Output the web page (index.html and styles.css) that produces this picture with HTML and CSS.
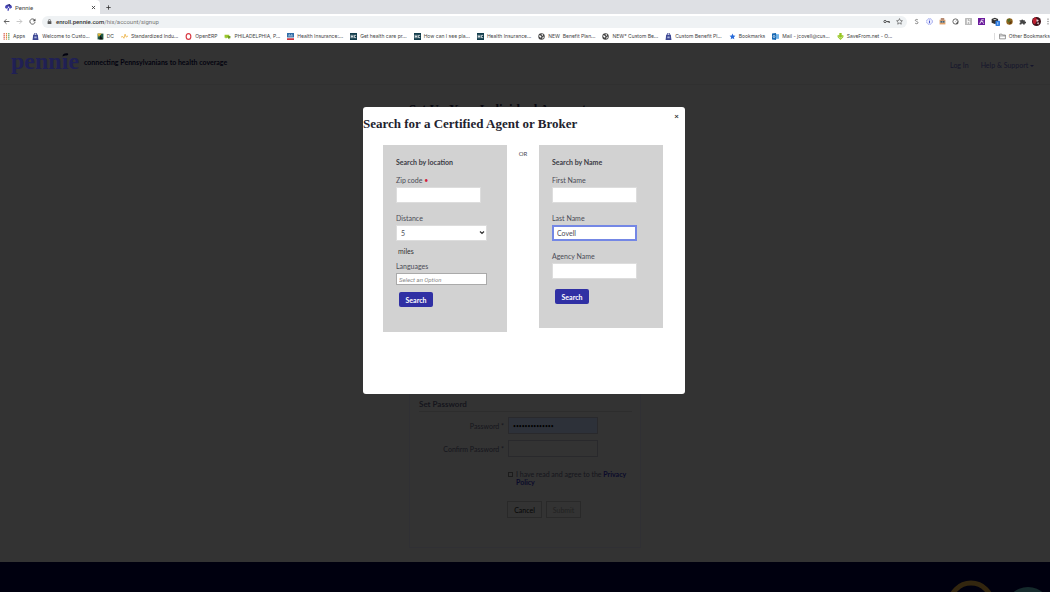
FILE: index.html
```
<!DOCTYPE html>
<html lang="en">
<head>
<meta charset="utf-8">
<title>Pennie</title>
<link rel="stylesheet" href="styles.css">
</head>
<body>
<svg class="defs" aria-hidden="true">
  <symbol id="bag" viewBox="0 0 12 12"><path d="M2 3h8l1 9H1z"/><path d="M4 4V2a2 2 0 0 1 4 0v2" fill="none" stroke="currentColor" stroke-width="1.500"/><path d="M4 6h4v3H4z" fill="#a9b3d8"/></symbol>
  <symbol id="globe" viewBox="0 0 12 12"><circle cx="6" cy="6" r="5.500"/><path d="M2 4l3 .5L6 7 4.500 8 2 6zM6 1.500l3 1L8 5 6.500 4zM8 7l2-1-.5 3L7 10z" fill="#fff"/></symbol>
  <symbol id="hc" viewBox="0 0 12 12"><path d="M0 0h12v12H0z" fill="#123c4b"/><path d="M2 3v6M5 3v6M2 6h3M10.500 4h-3v4h3" fill="none" stroke="#fff" stroke-width="1.300"/></symbol>
</svg>

<div class="browser">
  <div class="tabs">
    <div class="tab">
      <svg class="ico" viewBox="0 0 12 12"><path d="M0 6a6 5 0 0 1 12 0L9 8 8 6 6 12 4 11l1-4-3 1z" fill="#4948b8"/><path d="M3 2l5-2 2 3z" fill="#25225f"/><circle cx="6" cy="5.500" r="1.200" fill="#fff"/></svg>
      <span class="tab-title">Pennie</span>
      <button class="plain" aria-label="Close tab"><svg class="tiny" viewBox="0 0 8 8"><path d="M1.500 1.500l5 5m0-5l-5 5" stroke="#333" stroke-width="1.300"/></svg></button>
    </div>
    <button class="plain newtab" aria-label="New tab"><svg class="tiny" viewBox="0 0 8 8"><path d="M4 .5v7M.5 4h7" stroke="#333" stroke-width="1.300"/></svg></button>
  </div>
  <div class="toolbar">
    <button class="plain" aria-label="Back"><svg class="ico" viewBox="0 0 12 12"><path d="M11 6H2m4-4L2 6l4 4" fill="none" stroke="#444" stroke-width="1.400"/></svg></button>
    <button class="plain" aria-label="Forward"><svg class="ico" viewBox="0 0 12 12"><path d="M1 6h9M6 2l4 4-4 4" fill="none" stroke="#bbb" stroke-width="1.400"/></svg></button>
    <button class="plain" aria-label="Reload"><svg class="ico" viewBox="0 0 12 12"><path d="M10 4a4.500 4.500 0 1 0 .4 3" fill="none" stroke="#444" stroke-width="1.400"/><path d="M11 1v4.500H6.500z" fill="#444"/></svg></button>
    <div class="address">
      <svg class="tiny" viewBox="0 0 8 8"><path d="M1 3.500h6V8H1z" fill="#555"/><path d="M2.500 4V2a1.500 1.500 0 0 1 3 0v2" fill="none" stroke="#555"/></svg>
      <span class="url"><b>enroll.pennie.com</b>/hix/account/signup</span>
      <svg class="ico" viewBox="0 0 12 12"><circle cx="3.500" cy="6" r="2" fill="none" stroke="#444" stroke-width="1.500"/><path d="M5.500 6H11v2.500M9 6v2" fill="none" stroke="#444" stroke-width="1.500"/></svg>
      <svg class="ico" viewBox="0 0 12 12"><path d="M6 1l1.500 3.300 3.500.4-2.600 2.400.7 3.500L6 8.900l-3.100 1.700.7-3.500L1 4.700l3.500-.4z" fill="none" stroke="#444"/></svg>
    </div>
    <div class="extensions">
      <svg class="ico" viewBox="0 0 12 12"><path d="M8.500 3.500C7.500 2 4 2 4 4s4.500 1.500 4.500 4S4.500 10 3.500 8.500" fill="none" stroke="#666" stroke-width="1.300"/></svg>
      <svg class="ico" viewBox="0 0 12 12"><circle cx="6" cy="6" r="5" fill="#eef" stroke="#6878e0" stroke-dasharray="3 1"/><path d="M6 3v1m0 1v4" stroke="#3848c8" stroke-width="1.500"/></svg>
      <svg class="ico" viewBox="0 0 12 12"><path d="M1 3h10v8H1z" fill="#e2a168"/><path d="M3 0h6v4H3z" fill="#b68b72"/><path d="M2 5h8v3H2z" fill="#7898ad"/><circle cx="4" cy="6.500" r="1" fill="#333"/><circle cx="8" cy="6.500" r="1" fill="#333"/></svg>
      <svg class="ico" viewBox="0 0 12 12"><circle cx="6" cy="6" r="4.500" fill="none" stroke="#555" stroke-width="1.500"/><path d="M6 6l2-2M7 10l3-4v4z" stroke="#555" fill="#555"/></svg>
      <svg class="ico" viewBox="0 0 12 12"><rect width="12" height="12" rx="1" fill="#bbb"/><path d="M4 2v8M4 6h4v4M8 2v2" fill="none" stroke="#fff" stroke-width="1.500"/></svg>
      <svg class="ico" viewBox="0 0 12 12"><path d="M0 0h12v12H0z" fill="#6b1b9c"/><path d="M2 9h2l2-6h4M5 6h4M8 7l2 3" fill="none" stroke="#fff" stroke-width="1.300"/></svg>
      <svg class="badge" viewBox="0 0 14 14"><path d="M1 3l5-2 5 2v6l-5 2-5-2z" fill="#333"/><path d="M3 4l3-1 3 1-3 1z" fill="#ddd"/><rect x="7" y="6" width="7" height="8" rx="1" fill="#2f7de1"/><path d="M10.500 8v4" stroke="#fff"/></svg>
      <svg class="ico" viewBox="0 0 12 12"><circle cx="6" cy="6" r="5.500" fill="#93641d"/><path d="M2 3l4-2 2 3-4 4z" fill="#4e6b2a"/><path d="M6 7l4-2-1 4-3 2z" fill="#59330f"/></svg>
      <svg class="ico" viewBox="0 0 12 12"><path d="M1 4h3a1.500 1.500 0 1 1 3 0h3v2.500a1.500 1.500 0 1 1 0 2.500v2H7a1.500 1.500 0 0 0-3 0H1V8.500a1.500 1.500 0 0 0 0-3z" fill="#444"/></svg>
      <svg class="avatar" viewBox="0 0 12 12"><circle cx="6" cy="6" r="6" fill="#3b1118"/><path d="M1 3l4-3 2 4-3 6-3-2z" fill="#bd1f2f"/><path d="M6 3l3 1-1 2H6zM6 8l3-1v3z" fill="#e8d9dc"/></svg>
      <svg class="dots" viewBox="0 0 2 12"><path d="M1 1v2m0 2v2m0 2v2" stroke="#555" stroke-width="1.500"/></svg>
    </div>
  </div>
  <nav class="bookmarks">
    <a href="#"><svg class="ico" viewBox="0 0 12 12"><path d="M2 0v12" stroke="#d85a50" stroke-width="2" stroke-dasharray="2.500 1"/><path d="M6 0v12" stroke="#e08a3c" stroke-width="2" stroke-dasharray="2.500 1"/><path d="M10 0v12" stroke="#5ba466" stroke-width="2" stroke-dasharray="2.500 1"/></svg>Apps</a>
    <a href="#"><svg class="ico indigo"><use href="#bag"/></svg>Welcome to Custo...</a>
    <a href="#"><svg class="ico" viewBox="0 0 12 12"><path d="M1 1h10v10H1z" fill="#1d5743"/><path d="M1 1h7L3 7z" fill="#e5b636"/><path d="M6 4l4 7H4z" fill="#111"/></svg>DC</a>
    <a href="#"><svg class="ico" viewBox="0 0 12 12"><path d="M0 7l3-1 2 3 2-7 2 5 3-2" fill="none" stroke="#eeb54a" stroke-width="1.500"/></svg>Standardized Indu...</a>
    <a href="#"><svg class="ico" viewBox="0 0 12 12"><ellipse cx="6" cy="6" rx="4" ry="5" fill="none" stroke="#d93b45" stroke-width="2"/></svg>OpenERP</a>
    <a href="#"><svg class="ico" viewBox="0 0 12 12"><path d="M1 3h8v5H5L3 10V8H1z" fill="#9bc72d"/><path d="M6 5h5v4H9v2L7 9z" fill="#6e9e22"/></svg>PHILADELPHIA, P...</a>
    <a href="#"><svg class="ico" viewBox="0 0 12 12"><path d="M0 0h12v8H0z" fill="#2f6da7"/><path d="M0 8h12v1H0z" fill="#fff"/><path d="M0 9h12v3H0z" fill="#ca3540"/><path d="M2 5h8M3 3h2m2 0h2" stroke="#fff"/></svg>Health Insurance:...</a>
    <a href="#"><svg class="ico"><use href="#hc"/></svg>Get health care pr...</a>
    <a href="#"><svg class="ico"><use href="#hc"/></svg>How can I see pla...</a>
    <a href="#"><svg class="ico"><use href="#hc"/></svg>Health Insurance...</a>
    <a href="#"><svg class="ico grey"><use href="#globe"/></svg>NEW&nbsp; Benefit Plan...</a>
    <a href="#"><svg class="ico grey"><use href="#globe"/></svg>NEW* Custom Be...</a>
    <a href="#"><svg class="ico indigo"><use href="#bag"/></svg>Custom Benefit Pl...</a>
    <a href="#"><svg class="ico" viewBox="0 0 12 12"><path d="M6 1l1.500 3.300 3.500.4-2.600 2.400.7 3.500L6 8.900l-3.100 1.700.7-3.500L1 4.700l3.500-.4z" fill="#276bdb"/></svg>Bookmarks</a>
    <a href="#"><svg class="ico" viewBox="0 0 12 12"><path d="M5 2h7v8H5z" fill="#72b4e8"/><path d="M0 1l7-1v12l-7-1z" fill="#1768b3"/><ellipse cx="3.500" cy="6" rx="1.500" ry="2" fill="none" stroke="#fff"/></svg>Mail - jcovell@cus...</a>
    <a href="#"><svg class="ico" viewBox="0 0 12 12"><path d="M4 0h4v4h3v3L6 12 1 7V4h3z" fill="#96c620"/><path d="M3 6l3 3 3-3" fill="none" stroke="#fff"/></svg>SaveFrom.net - O...</a>
    <a href="#" class="other"><svg class="ico" viewBox="0 0 12 12"><path d="M1 2h4l1 1.500h5V10H1zM1 5h10" fill="none" stroke="#555"/></svg>Other Bookmarks</a>
  </nav>
</div>

<div class="page">
  <header class="site-header">
    <a class="logo" href="#">penn<span class="hat">ı<svg viewBox="0 0 12 8"><path d="M0 7C0 1 6 0 11 1c1 2 0 4-3 4-3 0-5 0-8 2z" fill="#02020f"/></svg></span>e</a>
    <span class="tagline">connecting Pennsylvanians to health coverage</span>
    <nav class="site-nav"><a href="#">Log In</a><a href="#">Help &amp; Support <span class="caret"></span></a></nav>
  </header>
  <main class="signup">
    <h1>Set Up Your Individual Account</h1>
    <form class="card">
      <h2>Set Password</h2>
      <div class="row"><label for="pw">Password *</label><input id="pw" class="filled" type="password" value="abcdefghijklmn"></div>
      <div class="row"><label for="pw2">Confirm Password *</label><input id="pw2" type="password"></div>
      <div class="agree"><input id="agree" type="checkbox"><label for="agree">I have read and agree to the <a href="#">Privacy<br>Policy</a></label></div>
      <div class="actions"><button type="button">Cancel</button><button type="button" disabled>Submit</button></div>
    </form>
  </main>
  <footer class="site-footer"><svg viewBox="0 0 110 30"><circle cx="31" cy="42" r="21" fill="none" stroke="#33260f" stroke-width="5"/><circle cx="88" cy="48" r="23" fill="#152a2c"/></svg></footer>

  <div class="modal" role="dialog" aria-labelledby="dlg-title">
    <button class="plain close" aria-label="Close">×</button>
    <h2 id="dlg-title">Search for a Certified Agent or Broker</h2>
    <div class="panels">
      <form class="panel location">
        <h3>Search by location</h3>
        <label for="zip">Zip code <span class="req">•</span></label>
        <input id="zip" type="text">
        <label for="dist">Distance</label>
        <div class="picker">
          <select id="dist"><option>5</option></select>
          <svg viewBox="0 0 6 4"><path d="M1 .5l2 2 2-2" fill="none" stroke="#333" stroke-width="1.200"/></svg>
        </div>
        <span class="miles">miles</span>
        <label for="lang">Languages</label>
        <input id="lang" class="lang" type="text" placeholder="Select an Option">
        <button type="button" class="primary">Search</button>
      </form>
      <span class="or">OR</span>
      <form class="panel name">
        <h3>Search by Name</h3>
        <label for="first">First Name</label>
        <input id="first" type="text">
        <label for="last">Last Name</label>
        <input id="last" class="focused" type="text" value="Covell">
        <label for="agency">Agency Name</label>
        <input id="agency" type="text">
        <button type="button" class="primary">Search</button>
      </form>
    </div>
  </div>
</div>
</body>
</html>
```
FILE: styles.css
```
* { box-sizing: border-box; }
body {
  margin: 0;
  min-height: 100vh;
  display: flex;
  flex-direction: column;
  overflow: hidden;
  font-family: Lato, sans-serif;
  font-size: 7px;
}
h1, h2, h3 { margin: 0; }
a { color: inherit; text-decoration: none; }
button, input, select { font-family: inherit; font-size: 7px; margin: 0; }
.plain { display: flex; border: 0; padding: 0; background: none; }
.defs { display: none; }

/* Browser chrome */
.browser { font-family: Roboto, sans-serif; font-size: 6px; color: #444; background: #fff; }
.ico { width: 7px; height: 7px; flex: none; }
.tiny { width: 5px; height: 5px; flex: none; }
.indigo { color: #3d4794; fill: #3d4794; }
.grey { fill: #444; }
.tabs { display: flex; align-items: center; height: 14px; background: #dee0e4; }
.tab { display: flex; align-items: center; gap: 3px; width: 100px; height: 14px; padding: 0 4px 0 5px; background: #fff; border-radius: 0 4px 0 0; }
.tab-title { flex: 1; }
.newtab { margin-left: 6px; }
.toolbar { display: flex; align-items: center; gap: 6px; height: 15px; padding: 0 1px 0 3px; }
.address { flex: 1; display: flex; align-items: center; gap: 6px; height: 12px; padding: 0 4px 0 5px; border-radius: 6px; background: #eff2f4; }
.address .tiny { margin-right: -2px; }
.url { flex: 1; color: #777; font-size: 6px; }
.url b { color: #333; font-weight: 500; }
.extensions { display: flex; align-items: center; gap: 6px; }
.badge { width: 9px; height: 9px; }
.avatar { width: 9px; height: 9px; }
.dots { width: 2px; height: 7px; }
.bookmarks { display: flex; align-items: center; gap: 7px; height: 14px; padding: 0 0 0 3px; white-space: nowrap; font-family: Inter, sans-serif; font-size: 5px; }
.bookmarks a { display: flex; align-items: center; gap: 3px; }
.bookmarks .other { margin-left: auto; padding-left: 4px; border-left: 1px solid #ddd; }

/* Dimmed page */
.page { position: relative; flex: 1; display: flex; flex-direction: column; background: #333; color: #15151c; }
.site-header { display: flex; align-items: flex-start; height: 42px; padding: 0 16px 0 11px; border-bottom: 1px solid #303030; }
.logo { font-family: "Liberation Serif", serif; font-weight: bold; font-size: 24px; line-height: 36px; color: #202055; }
.hat { position: relative; }
.hat svg { position: absolute; left: 0; top: 5px; width: 7px; height: 4px; }
.tagline { margin: 14px 0 0 5px; font-weight: 700; line-height: 10px; color: #03030f; }
.site-nav { display: flex; gap: 12px; margin: 17px 0 0 auto; line-height: 10px; color: #15152c; }
.caret { display: inline-block; border: 2px solid transparent; border-top-color: currentColor; border-bottom: 0; vertical-align: middle; }
.signup { flex: 1; display: flex; flex-direction: column; width: 232px; margin: 0 auto 14px; }
.signup h1 { padding-top: 15px; font-family: "Liberation Serif", serif; font-size: 13px; line-height: 18px; white-space: nowrap; color: #08080f; }
.card { flex: 1; display: flex; flex-direction: column; justify-content: flex-end; padding: 0 8px 29px 9px; border: 1px solid #303034; }
.card h2 { margin-bottom: 5px; padding-bottom: 2px; border-bottom: 1px solid #2d2d2d; font-size: 8px; line-height: 10px; }
.row { display: flex; align-items: center; gap: 4px; margin-bottom: 6px; }
.row label { width: 85px; text-align: right; }
.row input { width: 90px; height: 17px; padding: 0 4px; border: 1px solid #29292c; background: #333; color: #000; }
.row .filled { background: #2d3139; font-size: 5px; }
.agree { display: flex; align-items: flex-start; gap: 3px; margin: 7px 0 15px 89px; line-height: 8px; }
.agree input { appearance: none; width: 5px; height: 5px; margin-top: 2px; border: 1px solid #1c1c1c; }
.agree a { font-weight: bold; color: #0a0a2a; }
.actions { display: flex; gap: 4px; margin-left: 88px; }
.actions button { width: 35px; height: 17px; padding: 0; border: 1px solid #292929; background: #333; color: #060606; }
.actions button:disabled { color: #222; }
.site-footer { height: 30px; display: flex; justify-content: flex-end; background: #00000f; }
.site-footer svg { width: 110px; height: 30px; }

/* Broker search dialog */
.modal { position: absolute; top: 64px; left: 0; right: 2px; margin: 0 auto; width: 322px; min-height: 287px; background: #fff; border-radius: 3px; color: #4b4b55; }
.close { position: absolute; right: 6px; top: 5px; font-size: 8px; line-height: 9px; font-weight: bold; color: #333; }
.modal h2 { padding-top: 8px; font-family: "Liberation Serif", serif; font-size: 13px; line-height: 18px; color: #22222e; }
.panels { display: flex; align-items: flex-start; padding: 12px 22px 0 20px; }
.panel { flex: 1; display: flex; flex-direction: column; align-items: flex-start; padding: 12px 12px 24px 13px; background: #d2d2d2; }
.location { padding-bottom: 25px; }
.or { width: 32px; padding-top: 4px; text-align: center; font-size: 6px; line-height: 9px; }
.panel h3 { margin-bottom: 8px; font-size: 7px; line-height: 10px; color: #3b3b45; }
.panel label { margin-bottom: 2px; line-height: 10px; }
.req { color: #d4233b; }
.panel input, .panel select { width: 85px; height: 16px; margin-bottom: 10px; padding: 0 4px; border: 1px solid #ddd; background: #fff; color: #4b4b55; }
.picker { position: relative; display: flex; margin-bottom: 5px; }
.panel select { appearance: none; width: 91px; margin: 0; }
.picker svg { position: absolute; right: 2px; top: 6px; width: 6px; height: 4px; pointer-events: none; }
.panel .miles { padding-left: 2px; margin-bottom: 5px; line-height: 10px; color: #333; }
.panel .lang { width: 91px; height: 12px; margin-bottom: 7px; padding: 0 2px; border-color: #aaa; font-family: Roboto, sans-serif; font-size: 6px; font-style: italic; }
.lang::placeholder { color: #888; }
.panel .focused { border-color: #7487e5; outline: 1px solid #7487e5; outline-offset: -2px; }
.primary { width: 34px; height: 15px; margin-left: 3px; padding: 0; border: 0; border-radius: 2px; background: #3030a4; color: #fff; font-weight: bold; }
```
